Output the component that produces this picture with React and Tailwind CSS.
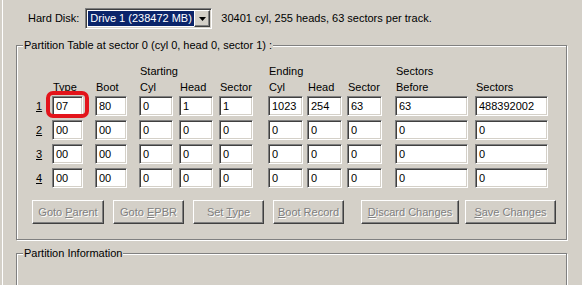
import React from 'react';

const sunken =
  'border border-t-[#808080] border-l-[#808080] border-b-white border-r-white shadow-[inset_1px_1px_0_#404040,inset_-1px_-1px_0_#d4d0c8]';
const raised =
  'border border-t-white border-l-white border-b-[#404040] border-r-[#404040] shadow-[inset_-1px_-1px_0_#808080,inset_1px_1px_0_#d4d0c8]';
const etched =
  'relative border border-[#808080] shadow-[1px_1px_0_#ffffff,inset_1px_1px_0_#ffffff]';

const cols = [
  { cell: 'w-[43px]', input: 'w-[31px]', top: '', head: 'Type' },
  { cell: 'w-[44px]', input: 'w-[32px]', top: '', head: 'Boot' },
  { cell: 'w-[40px]', input: 'w-[34px]', top: 'Starting', head: 'Cyl' },
  { cell: 'w-[40px]', input: 'w-[34px]', top: '', head: 'Head' },
  { cell: 'w-[49px]', input: 'w-[34px]', top: '', head: 'Sector' },
  { cell: 'w-[39px]', input: 'w-[35px]', top: 'Ending', head: 'Cyl' },
  { cell: 'w-[40px]', input: 'w-[35px]', top: '', head: 'Head' },
  { cell: 'w-[48px]', input: 'w-[35px]', top: '', head: 'Sector' },
  { cell: 'w-[80px]', input: 'w-[73px]', top: 'Sectors', head: 'Before' },
  { cell: 'w-[73px]', input: 'w-[73px]', top: '', head: 'Sectors' },
];

const rows = [
  ['07', '80', '0', '1', '1', '1023', '254', '63', '63', '488392002'],
  ['00', '00', '0', '0', '0', '0', '0', '0', '0', '0'],
  ['00', '00', '0', '0', '0', '0', '0', '0', '0', '0'],
  ['00', '00', '0', '0', '0', '0', '0', '0', '0', '0'],
];

const buttons = [
  { pre: 'Goto ', key: 'P', post: 'arent', cls: 'w-[72px]' },
  { pre: 'Goto ', key: 'E', post: 'PBR', cls: 'w-[71px] ml-[9px]' },
  { pre: 'Set ', key: 'T', post: 'ype', cls: 'w-[71px] ml-[9px]' },
  { pre: '', key: 'B', post: 'oot Record', cls: 'w-[71px] ml-[9px]' },
  { pre: '', key: 'D', post: 'iscard Changes', cls: 'w-[98px] ml-[17px]' },
  { pre: '', key: 'S', post: 'ave Changes', cls: 'w-[91px] ml-[6px]' },
];

function GroupLabel({ children }) {
  return (
    <span className="absolute -top-[8px] left-[6px] px-[1px] bg-[#d4d0c8] leading-[14px]">
      {children}
    </span>
  );
}

export default function App() {
  return (
    <div className="relative w-[582px] h-[285px] overflow-hidden bg-[#d4d0c8] text-[11px] text-black font-['Liberation_Sans',Arial,sans-serif]">
      <div className="ml-[2px] h-full border-l border-white">
        {/* disk selector */}
        <div className="flex items-center pt-[8px] pl-[25px] h-[29px]">
          <span>Hard Disk:</span>
          <div className={`ml-[6px] w-[127px] h-[21px] flex items-center bg-white ${sunken}`}>
            <div className="ml-[2px] w-[106px] h-[15px] flex items-center bg-[#0a246a] text-white pl-[2px] leading-none">
              Drive 1 (238472 MB)
            </div>
            <div className={`ml-auto mr-[1px] w-[16px] h-[17px] flex items-center justify-center bg-[#d4d0c8] ${raised}`}>
              <svg width="7" height="4" viewBox="0 0 7 4">
                <path d="M0 0h7L3.5 4z" fill="#000" />
              </svg>
            </div>
          </div>
          <span className="ml-[9px]">30401 cyl, 255 heads, 63 sectors per track.</span>
        </div>

        {/* partition table group */}
        <div className={`ml-[13px] mt-[16px] w-[551px] h-[195px] ${etched}`}>
          <GroupLabel>Partition Table at sector 0 (cyl 0, head 0, sector 1) :</GroupLabel>
          <div className="pt-[17px] pl-[19px]">
            <div className="flex leading-[16px]">
              <div className="w-[16px]" />
              {cols.map((c, i) => (
                <div key={i} className={`${c.cell} pl-[1px]`}>
                  <div className="h-[16px]">{c.top}</div>
                  <div>{c.head}</div>
                </div>
              ))}
            </div>
            <div className="mt-[1px] flex flex-col gap-[4px]">
              {rows.map((r, ri) => (
                <div key={ri} className="flex items-center h-[20px]">
                  <div className="w-[16px] underline">{ri + 1}</div>
                  {cols.map((c, ci) => (
                    <div key={ci} className={c.cell}>
                      <div className={`${c.input} h-[20px] bg-white flex items-center pl-[3px] ${sunken}`}>
                        {r[ci]}
                      </div>
                    </div>
                  ))}
                </div>
              ))}
            </div>
          </div>
          <div className="mt-[12px] pl-[15px] flex">
            {buttons.map((b, i) => (
              <div
                key={i}
                className={`${b.cls} h-[24px] flex items-center justify-center text-[#808080] [text-shadow:1px_1px_0_#ffffff] ${raised}`}
              >
                <span className="whitespace-pre">
                  {b.pre}
                  <span className="underline">{b.key}</span>
                  {b.post}
                </span>
              </div>
            ))}
          </div>
        </div>

        {/* partition information group */}
        <div className={`ml-[13px] mt-[13px] w-[551px] h-[60px] ${etched}`}>
          <GroupLabel>Partition Information</GroupLabel>
        </div>
      </div>

      {/* red highlight annotation */}
      <div className="absolute left-[46px] top-[91px] w-[43px] h-[27px] rounded-[7px] border-[4px] border-[#e3141b]" />
    </div>
  );
}
